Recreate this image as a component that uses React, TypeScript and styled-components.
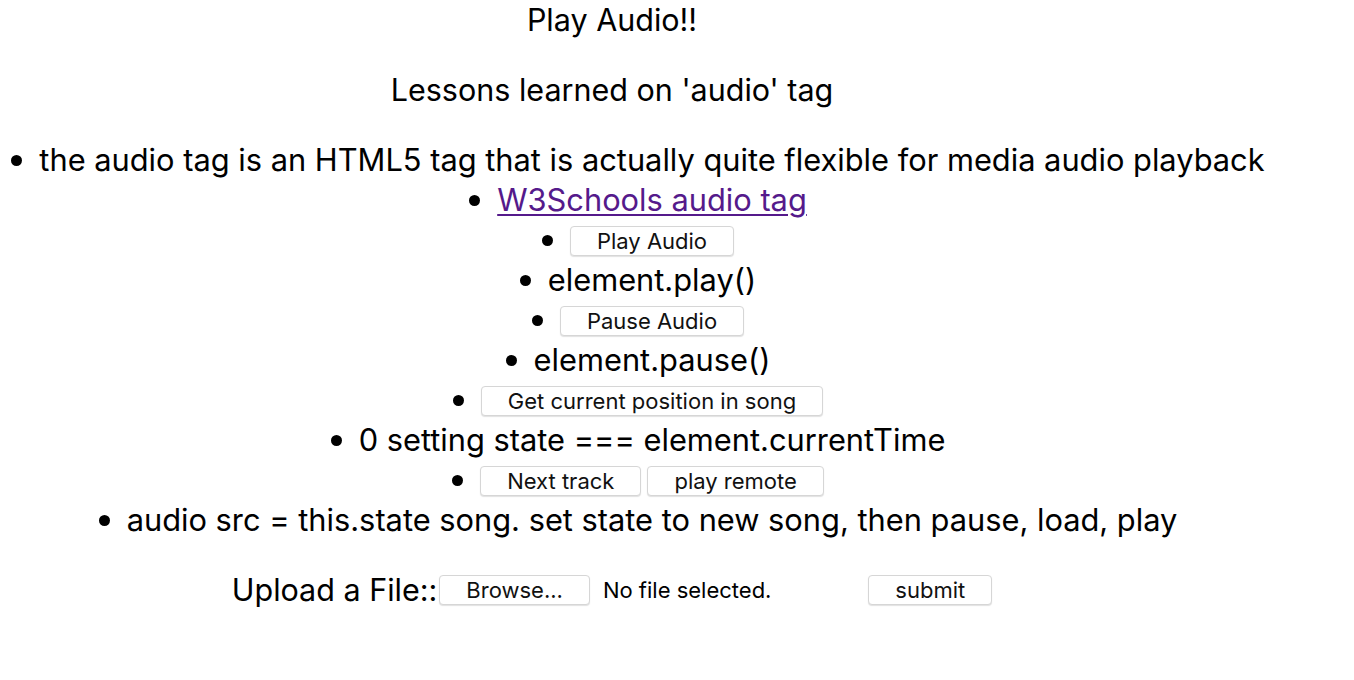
import React from "react";
import styled, { createGlobalStyle } from "styled-components";

const GlobalStyle = createGlobalStyle`
  html, body {
    margin: 0;
    padding: 0;
    background: #ffffff;
  }
  body {
    font-family: "Inter", "Liberation Sans", sans-serif;
    color: #000000;
    overflow: hidden;
  }
`;

const Page = styled.div`
  width: 1224px;
  text-align: center;
  font-size: 30.5px;
  line-height: 40px;
`;

const Title = styled.div`
  height: 40px;
`;

const Subtitle = styled.div`
  margin-top: 30px;
  height: 40px;
`;

const List = styled.ul`
  margin: 30px 0 0 9px;
  padding: 0;
  width: 1286px;
  list-style: none;
`;

const Item = styled.li`
  height: 40px;
  line-height: 40px;
  white-space: nowrap;
  padding-right: 28px;
  font-size: 30.8px;

  &::before {
    content: "";
    display: inline-block;
    width: 11px;
    height: 11px;
    margin: 0 17px 4px 0;
    border-radius: 50%;
    background: #000000;
    vertical-align: middle;
  }
`;

const Link = styled.a`
  color: #551a8b;
  text-decoration: underline;
  text-underline-offset: 3px;
  text-decoration-thickness: 2px;
`;

const Button = styled.button<{ $gap?: number; $raised?: boolean }>`
  font-family: "Inter", "Liberation Sans", sans-serif;
  font-size: 22px;
  height: 30px;
  line-height: 26px;
  padding: 0 26px;
  margin: 0 0 ${(p) => (p.$raised ? 4 : 0)}px ${(p) => p.$gap ?? 0}px;
  background: #ffffff;
  color: #111111;
  border: 1px solid #d6d6d6;
  border-radius: 4px;
  box-shadow: 0 1px 1px rgba(0, 0, 0, 0.12);
  vertical-align: middle;
  cursor: pointer;
`;

const UploadForm = styled.form`
  margin-top: 30px;
  height: 40px;
  display: flex;
  align-items: center;
  justify-content: center;
`;

const UploadLabel = styled.span`
  font-size: 30.5px;
`;

const FileInput = styled.span`
  display: inline-flex;
  align-items: center;
  width: 429px;
  margin-left: 2px;
`;

const FileName = styled.span`
  font-size: 22px;
  margin-left: 13px;
`;

export default function App() {
  return (
    <>
      <GlobalStyle />
      <Page>
        <Title>Play Audio!!</Title>
        <Subtitle>Lessons learned on 'audio' tag</Subtitle>
        <List>
          <Item>
            the audio tag is an HTML5 tag that is actually quite flexible for
            media audio playback
          </Item>
          <Item>
            <Link href="#">W3Schools audio tag</Link>
          </Item>
          <Item>
            <Button type="button" $raised>
              Play Audio
            </Button>
          </Item>
          <Item>element.play()</Item>
          <Item>
            <Button type="button" $raised>
              Pause Audio
            </Button>
          </Item>
          <Item>element.pause()</Item>
          <Item>
            <Button type="button" $raised>
              Get current position in song
            </Button>
          </Item>
          <Item>0 setting state === element.currentTime</Item>
          <Item>
            <Button type="button" $raised>
              Next track
            </Button>
            <Button type="button" $raised $gap={6}>
              play remote
            </Button>
          </Item>
          <Item>
            audio src = this.state song. set state to new song, then pause,
            load, play
          </Item>
        </List>
        <UploadForm onSubmit={(e) => e.preventDefault()}>
          <UploadLabel>Upload a File::</UploadLabel>
          <FileInput>
            <Button type="button">Browse...</Button>
            <FileName>No file selected.</FileName>
          </FileInput>
          <Button type="submit">submit</Button>
        </UploadForm>
      </Page>
    </>
  );
}
